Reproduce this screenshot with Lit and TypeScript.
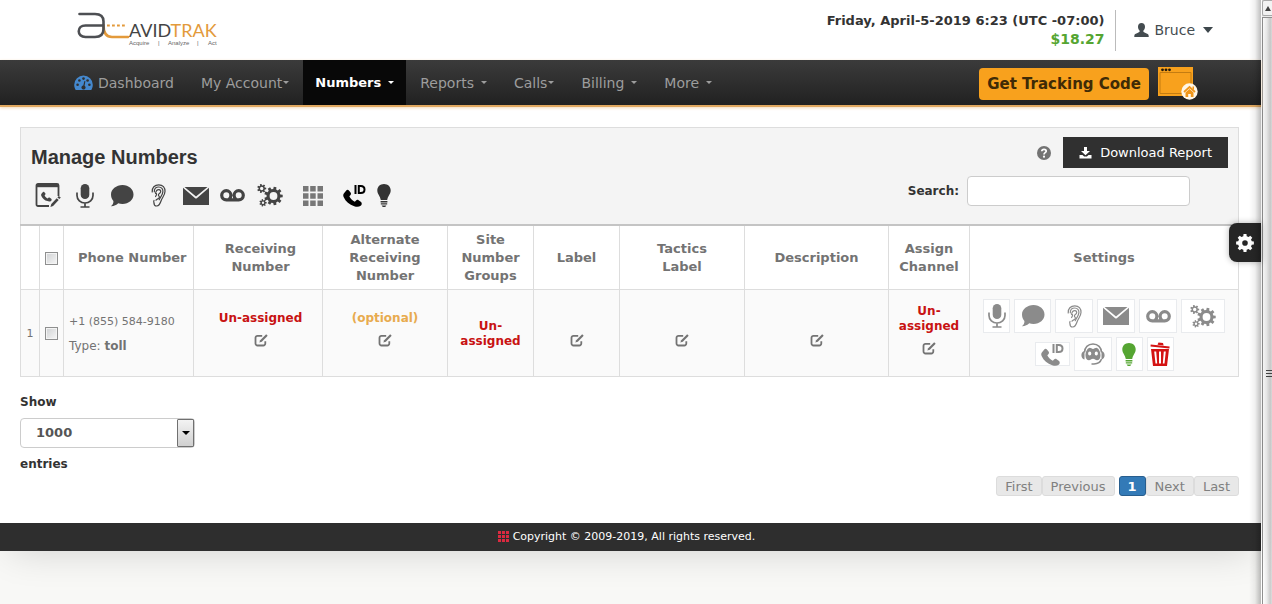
import { LitElement, html, svg, css, nothing, TemplateResult } from "lit";
import { customElement } from "lit/decorators.js";

type Icon = { w: number; h: number; body: TemplateResult };

/* Outline of a cog with n teeth, centred on (cx, cy). */
function cog(cx: number, cy: number, outer: number, inner: number, hole: number, n: number): string {
  const pts: string[] = [];
  for (let i = 0; i < n; i++) {
    const a = (i / n) * Math.PI * 2;
    const s = Math.PI / n;
    for (const [r, d] of [[inner, -s * 0.62], [outer, -s * 0.42], [outer, s * 0.42], [inner, s * 0.62]]) {
      pts.push(`${(cx + r * Math.cos(a + d)).toFixed(2)} ${(cy + r * Math.sin(a + d)).toFixed(2)}`);
    }
  }
  return `M${pts.join("L")}ZM${cx - hole} ${cy}a${hole} ${hole} 0 1 0 ${hole * 2} 0a${hole} ${hole} 0 1 0 ${-hole * 2} 0Z`;
}

const handset =
  "M1.2 9.6C.2 10.6-.1 12 .6 13.6 2.6 18 6.400 21.200 11 22.600 13.500 23.400 15.800 23.200 17.300 22.200 18.500 21.300 18.800 19.600 17.700 18.500L15.300 16.700C14.500 16.100 13.500 16.100 12.800 16.900L11.600 18.200C9.300 17 7.300 15 6.200 12.800L7.200 11.800C8 11 8 10 7.400 9.200L5.800 7.200C5 6.200 3.800 6.300 3 7.400Z";

const ICONS: Record<string, Icon> = {
  callEdit: {
    w: 26, h: 25,
    body: svg`<path d="M14 23H3a1.500 1.500 0 0 1-1.500-1.500V2.500A1.500 1.500 0 0 1 3 1h19a1.500 1.500 0 0 1 1.500 1.500V13" fill="none" stroke="currentColor" stroke-width="1.800"/>
      <path d="M1.500 1h22v3.200h-22z"/>
      <path transform="translate(6 5) scale(.58)" d=${handset}/>
      <path d="M25.800 14.500l-2-1.500-1.400 1.500 2 1.600zM21.700 15.200l2 1.700-5.600 6-2.700 1.200.9-3z"/>`,
  },
  mic: {
    w: 18, h: 24,
    body: svg`<rect x="4.700" y="0" width="8.600" height="15" rx="4.300"/>
      <path d="M1 8.500V11.500a8 7.500 0 0 0 16 0V8.500M9 19v4M4.500 23h9" fill="none" stroke="currentColor" stroke-width="1.700"/>`,
  },
  chat: {
    w: 24, h: 22,
    body: svg`<path d="M12.500 0C18.800 0 23.500 4.300 23.500 9.500S18.800 19 12.500 19c-1.500 0-3-.2-4.300-.7C6.500 20 4 21.400.8 21.300 2.700 19.800 3.600 18 3.400 15.900 1.800 14.200 1 12 1 9.500 1 4.300 6.200 0 12.500 0Z"/>`,
  },
  ear: {
    w: 15, h: 23,
    body: svg`<g fill="none" stroke="currentColor" stroke-width="1.200" stroke-linecap="round">
      <path d="M1.200 8C.8 3.500 3.800.8 7.800.8c4 0 6.400 2.800 6.200 6.700-.2 4-2.800 5.900-3.800 9-.9 2.800-1.800 5.400-4.400 5.500-1.600.1-2.700-1-2.800-2.500"/>
      <path d="M3.300 7.800C3.300 4.800 5 3 7.700 3c2.900 0 4.400 2 4.200 4.600-.2 3.500-2.600 5.300-3.700 8.100"/>
      <path d="M4.500 9.500C5 7 6.300 5.600 7.900 5.700c1.600.1 2.100 1.500 1.600 2.600-.6 1.300-2.200 1.300-2.100 2.700.1 1.100 1.300 1.200 1 2.300-.4 1.400-2.300 1.300-3.400 2.900"/>
      <path d="M5.500 9.600c.3 1-.3 2-.9 2.900M3 16.500c-.5 1-.4 2 .2 2.600"/></g>`,
  },
  mail: {
    w: 26, h: 18,
    body: svg`<path d="M1.500 0h23L13 9.500zM0 .8l12.200 10.400a1.200 1.200 0 0 0 1.600 0L26 .8V18H0z"/>`,
  },
  voicemail: {
    w: 25, h: 13,
    body: svg`<path d="M6.300 1.700a4.600 4.600 0 1 0 0 9.200h12.400a4.600 4.600 0 1 0-4.600-4.600c0 1.800.8 3.300 2 4.100M6.300 1.700a4.600 4.600 0 0 1 4.600 4.600c0 1.800-.8 3.300-2 4.100" fill="none" stroke="currentColor" stroke-width="3.200"/>`,
  },
  gears: {
    w: 26, h: 23,
    body: svg`<path fill-rule="evenodd" d=${cog(16.5, 12, 9.3, 7, 3.9, 9)}/>
      <path fill-rule="evenodd" d=${cog(4.7, 4.5, 4.6, 3.2, 1.7, 7)}/>
      <path fill-rule="evenodd" d=${cog(6, 18.8, 3.7, 2.6, 1.2, 7)}/>`,
  },
  grid: {
    w: 20, h: 20,
    body: svg`<path d="M0 0h5.500v5.500H0zM7.200 0h5.500v5.500H7.200zM14.500 0H20v5.500h-5.500zM0 7.200h5.500v5.500H0zM7.200 7.200h5.500v5.500H7.200zM14.500 7.200H20v5.500h-5.500zM0 14.500h5.500V20H0zM7.200 14.500h5.500V20H7.200zM14.500 14.500H20V20h-5.500z"/>`,
  },
  callId: {
    w: 23, h: 23,
    body: svg`<path transform="translate(0 -.8) scale(1.020)" d=${handset}/>
      <path d="M12.500 1v9M15.800 2h2c2.300 0 3.700 1.100 3.700 3.500S20.100 9 17.800 9h-2z" fill="none" stroke="currentColor" stroke-width="2"/>`,
  },
  bulb: {
    w: 14, h: 23,
    body: svg`<path d="M7 0c3.900 0 6.700 2.800 6.700 6.400 0 3.700-2.900 5.400-3.500 9.600H3.800C3.200 11.800.3 10.100.3 6.400.3 2.800 3.100 0 7 0ZM3.600 17h6.800v1.400H3.600zM3.800 19.300h6.400v1.300H3.800zM4.600 21.400h4.800L8.200 23H5.800z"/>`,
  },
  agent: {
    w: 24, h: 22,
    body: svg`<path d="M3.500 9.500C3.500 4.500 7 1 12 1s8.500 3.500 8.500 8.500" fill="none" stroke="currentColor" stroke-width="1.500"/>
      <path d="M3.500 8v8.500C1.500 16 .4 14.500.4 12.300S1.500 8.600 3.500 8ZM20.500 8v8.500c2-.5 3.100-2 3.100-4.200s-1.100-3.700-3.100-4.300Z"/>
      <path fill-rule="evenodd" d="M12 6c1.200 0 2-1.200 3.500-1.200 2.600.6 4 4.600 4 7.700 0 3-1.400 4.700-3.500 4.700-1.500 0-2.300-1.400-4-1.400s-2.500 1.400-4 1.400c-2.100 0-3.500-1.700-3.500-4.700 0-3.100 1.400-7.100 4-7.700C10 4.800 10.800 6 12 6ZM8.700 8.600a1.600 2 0 1 0 0 4 1.600 2 0 0 0 0-4ZM15.300 8.600a1.600 2 0 1 0 0 4 1.600 2 0 0 0 0-4Z"/>
      <path d="M20.500 16c-1 3.200-3.200 4.800-7.500 5H10.500" fill="none" stroke="currentColor" stroke-width="1.500"/>`,
  },
  trash: {
    w: 20, h: 24,
    body: svg`<path d="M.6 3.400L19.500 5.500" stroke="currentColor" stroke-width="2"/><path d="M7.500 2.800L8.500.4 13 .9l.6 2.600z"/>
      <path fill-rule="evenodd" d="M1 7h18l-2 17H3zM4.200 9.500l1.300 12h1.700L6.200 9.500zM9 9.500v12h2v-12zM13.800 9.500l-1 12h1.700l1.300-12z"/>`,
  },
  edit: {
    w: 14, h: 13,
    body: svg`<path d="M8.200 1.800H3.600A2 2 0 0 0 1.500 3.900v5.500a2 2 0 0 0 2.100 2.100h5.600a2 2 0 0 0 2.100-2.100V7.200" fill="none" stroke="currentColor" stroke-width="1.800"/>
      <path d="M12.200.3l1.500 1.400-5.900 6-2.500.9.900-2.400z"/>`,
  },
  gauge: {
    w: 19, h: 16,
    body: svg`<path d="M9.500.5A9.300 9.300 0 0 0 .2 9.800c0 2 .6 3.700 1.500 5.200h15.600c.9-1.500 1.500-3.200 1.500-5.200A9.300 9.300 0 0 0 9.500.5Z"/>
      <g fill="#303030"><circle cx="3.600" cy="9.800" r="1.300"/><circle cx="5.400" cy="5.500" r="1.300"/><circle cx="9.500" cy="3.600" r="1.300"/><circle cx="13.600" cy="5.500" r="1.300"/><circle cx="15.400" cy="9.800" r="1.300"/><path d="M10.400 5.900l1 .3-.8 4.500a2.100 2.100 0 1 1-1.300-.3z"/></g>`,
  },
  user: {
    w: 15, h: 14,
    body: svg`<path d="M7.500 0c2.200 0 3.500 1.600 3.500 3.800 0 1.700-.7 3.100-1.700 4 0 1 .4 1.400 1.700 1.900 2.400.9 3.700 1.400 3.700 3.300v1H.3v-1c0-1.900 1.300-2.400 3.700-3.300 1.300-.5 1.700-.9 1.700-1.900C4.700 6.900 4 5.500 4 3.800 4 1.600 5.300 0 7.500 0Z"/>`,
  },
  help: {
    w: 14, h: 14,
    body: svg`<circle cx="7" cy="7" r="7"/><path d="M4.800 5.300C4.900 3.800 5.800 3.300 7 3.300s2.200.7 2.200 1.900C9.200 6.700 7 6.700 7 8.500" fill="none" stroke="#fff" stroke-width="1.700"/><circle cx="7" cy="10.700" r="1.100" fill="#fff"/>`,
  },
  download: {
    w: 13, h: 12,
    body: svg`<path d="M5 0h3v4h3L6.500 8.300 2 4h3zM.5 8h3l1.600 1.500h2.800L9.500 8h3v3.500H.5z"/>`,
  },
  cog: {
    w: 18, h: 18,
    body: svg`<path fill-rule="evenodd" d=${cog(9, 9, 9, 7, 2.8, 8)}/>`,
  },
  site: {
    w: 41, h: 34,
    body: svg`<path fill="#f8a11d" d="M0 0h35v29H0z"/><path d="M2 5.500h31v21H2z" fill="none" stroke="#c47c11" stroke-width="1"/>
      <g fill="#221a0c"><circle cx="4.500" cy="2.800" r="1.400"/><circle cx="8" cy="2.800" r="1.400"/><circle cx="11.500" cy="2.800" r="1.400"/></g>
      <circle cx="31.500" cy="24.500" r="8.200" fill="#fff6e6"/>
      <path d="M26 25l5.500-5 5.500 5" fill="none" stroke="#f0961a" stroke-width="1.700"/><path fill="#f0961a" d="M34.500 19.500h1.500v3.500l-1.500-1.300zM27.500 25.500l4-3.600 4 3.600V30h-2.700v-3h-2.600v3h-2.700z"/>`,
  },
};

function icon(name: string) {
  const i = ICONS[name];
  return html`<svg width=${i.w} height=${i.h} viewBox="0 0 ${i.w} ${i.h}" fill="currentColor" aria-hidden="true">${i.body}</svg>`;
}

const shared = css`
  :host { display: block; }
  * { box-sizing: border-box; }
  svg { display: block; flex: none; }
  button { font: inherit; color: inherit; border: 0; padding: 0; background: none; cursor: pointer; }
  a { color: inherit; text-decoration: none; }
`;

@customElement("site-header")
class SiteHeader extends LitElement {
  static styles = [shared, css`
    .bar { display: flex; align-items: center; height: 60px; padding: 0 48px 0 77px; background: #fff; }
    .logo { margin-right: auto; }
    .word { font: 18px Lato, sans-serif; }
    .tag { font: 6px "Liberation Sans", sans-serif; fill: #666; }
    .status { text-align: right; font-weight: bold; font-size: 13px; line-height: 18px; color: #333; padding-right: 11px; }
    .balance { font-size: 14px; color: #55a532; }
    .user { display: flex; align-items: center; height: 41px; padding-left: 18px; gap: 5px; border-left: 1px solid #bbb; font-size: 14px; color: #444c50; }
    .arrow { margin-left: 3px; border: 5px solid transparent; border-top: 6px solid #3d474c; border-bottom: 0; }
  `];
  render() {
    return html`<header class="bar">
      <a class="logo" href="#" aria-label="AvidTrak">
        <svg width="142" height="42" viewBox="0 0 142 42">
          <g fill="none" stroke-width="2.600" stroke-linecap="round">
            <path stroke="#e39a3b" d="M26.500 16c0 6 1.500 12 8.500 12H51"/>
            <path stroke="#4d4f53" d="M2.500 5H18c5.500 0 8.500 2.500 8.500 7.500V20c0 5-3 8-8.500 8H8.500c-9 0-9-11.500 0-11.500H26"/>
          </g>
          <path d="M30 16.500H50" stroke="#e39a3b" stroke-width="2" stroke-dasharray="2.800 2.200"/>
          <text class="word" x="52" y="28" fill="#444">AVID<tspan fill="#e39a3b">TRAK</tspan></text>
          <text class="tag" x="52" y="36">Acquire</text><text class="tag" x="81" y="36">|</text>
          <text class="tag" x="91" y="36">Analyze</text><text class="tag" x="120" y="36">|</text>
          <text class="tag" x="131" y="36">Act</text>
        </svg>
      </a>
      <div class="status">
        <div>Friday, April-5-2019 6:23 (UTC -07:00)</div>
        <div class="balance">$18.27</div>
      </div>
      <button class="user">${icon("user")}<span>Bruce</span><i class="arrow"></i></button>
    </header>`;
  }
}

const MENU = [
  { label: "Dashboard", icon: "gauge" },
  { label: "My Account", caret: "tight" },
  { label: "Numbers", caret: "wide", active: true },
  { label: "Reports", caret: "wide" },
  { label: "Calls", caret: "tight" },
  { label: "Billing", caret: "wide" },
  { label: "More", caret: "wide" },
];

@customElement("site-nav")
class SiteNav extends LitElement {
  static styles = [shared, css`
    .nav { display: flex; align-items: stretch; gap: 1px; height: 47px; padding: 0 62px 0 61px; background: linear-gradient(#3b3b3b, #212121); border-bottom: 2px solid #e0a860; box-shadow: 0 1px 3px #f3d9b8; }
    .item { display: flex; align-items: center; padding: 0 13px; font-size: 14px; color: #9d9d9d; }
    .item svg { margin-right: 5px; color: #4488ce; }
    .active { padding: 0 12px; background: #080808; color: #fff; font-weight: bold; font-size: 13px; }
    .caret { border: 3px solid transparent; border-top-color: currentColor; border-bottom: 0; margin-left: 1px; }
    .wide { margin-left: 7px; }
    .tools { display: flex; align-items: center; gap: 9px; margin-left: auto; padding-top: 2px; }
    .cta { height: 32px; padding: 0 8px; border-radius: 4px; background: #f8a11d; color: #3f2b06; font-weight: bold; font-size: 15px; }
  `];
  render() {
    return html`<nav class="nav">
      ${MENU.map((m) => html`<a class="item ${m.active ? "active" : ""}" href="#">${m.icon ? icon(m.icon) : nothing}${m.label}${m.caret ? html`<i class="caret ${m.caret}"></i>` : nothing}</a>`)}
      <div class="tools"><button class="cta">Get Tracking Code</button><a href="#" aria-label="Site">${icon("site")}</a></div>
    </nav>`;
  }
}

@customElement("numbers-toolbar")
class NumbersToolbar extends LitElement {
  static styles = [shared, css`
    .panel { display: flex; justify-content: space-between; padding: 9px 10px 10px; border: 1px solid #ddd; border-bottom: 0; background: #f4f4f4; }
    .title { margin: 0; font: bold 20px/40px "Liberation Sans", sans-serif; color: #333; }
    .icons { display: flex; color: #444; margin-left: -2px; }
    .icons button { display: grid; place-items: center; width: 37px; height: 37px; }
    .icons .grid { width: 50px; color: #777; }
    .icons .callId { width: 32px; color: #000; }
    .icons .bulb { width: 28px; color: #333; }
    .right { display: flex; flex-direction: column; align-items: flex-end; gap: 8px; }
    .line { display: flex; align-items: center; gap: 12px; color: #737373; }
    .download { display: flex; align-items: center; gap: 8px; height: 31px; padding: 0 16px; background: #303030; color: #fff; font-size: 13px; }
    .search { display: flex; align-items: center; gap: 8px; margin-right: 38px; font-size: 12px; font-weight: bold; color: #333; }
    .field { width: 223px; height: 30px; border: 1px solid #ccc; border-radius: 4px; background: #fff; }
  `];
  render() {
    const tools = ["callEdit", "mic", "chat", "ear", "mail", "voicemail", "gears", "grid", "callId", "bulb"];
    return html`<div class="panel">
      <div>
        <h1 class="title">Manage Numbers</h1>
        <div class="icons">${tools.map((t) => html`<button class=${t} aria-label=${t}>${icon(t)}</button>`)}</div>
      </div>
      <div class="right">
        <div class="line"><button aria-label="Help">${icon("help")}</button><button class="download">${icon("download")}Download Report</button></div>
        <label class="search">Search: <input class="field" type="search"></label>
      </div>
    </div>`;
  }
}

@customElement("numbers-table")
class NumbersTable extends LitElement {
  static styles = [shared, css`
    table { width: 100%; table-layout: fixed; border-collapse: collapse; color: #737373; }
    th, td { border: 1px solid #ddd; padding: 2px 0 0; text-align: center; vertical-align: middle; font-size: 12px; }
    th { height: 64px; border-top: 2px solid #c4c4c4; font-size: 13px; line-height: 18px; }
    td { height: 87px; background: #fafafa; line-height: 15px; }
    td.up { padding: 0 0 6px; }
    td.low { padding: 16px 0 0; }
    .c1 { width: 19px; } .c2 { width: 24px; } .c3 { width: 130px; } .c4 { width: 129px; } .c5 { width: 125px; }
    .c6 { width: 86px; } .c7 { width: 86px; } .c8 { width: 125px; } .c9 { width: 144px; } .c10 { width: 81px; }
    th.phone { text-align: left; padding-left: 14px; white-space: nowrap; }
    th.receiving, td.receiving { padding-left: 5px; }
    td.number { text-align: left; padding-left: 5px; line-height: 25px; }
    .small { font-size: 11px; }
    .tick { appearance: none; display: block; width: 13px; height: 13px; margin: 0 auto; border: 1px solid #8e8f8f; background: linear-gradient(135deg, #cfd1d3, #f6f6f6); box-shadow: inset 0 0 0 1px #f4f4f4; }
    .red { color: #c81212; font-weight: bold; }
    .amber { color: #e8ab4f; font-weight: bold; }
    .edit { display: block; margin: 0 auto; padding: 1px; }
    .red + .edit, .amber + .edit { margin-top: 7px; }
    .row { display: flex; justify-content: center; align-items: center; gap: 4px; color: #8b8b8b; }
    .row + .row { margin-top: 4px; }
    td.settings { padding: 5px 0 0; }
    .box { display: grid; place-items: center; width: 38px; height: 34px; border: 1px solid #e9ebee; background: #fff; }
    .box.mic, .box.bulb, .box.trash { width: 27px; }
    .box.chat { width: 37px; }
    .box.gears { width: 44px; }
    .box.callId { width: 35px; height: 24px; }
    .box.bulb { color: #55a532; }
    .box.trash { color: #d41313; }
  `];
  private edit() {
    return html`<button class="edit" aria-label="Edit">${icon("edit")}</button>`;
  }
  private boxes(names: string[]) {
    return html`<div class="row">${names.map((n) => html`<button class="box ${n}" aria-label=${n}>${icon(n)}</button>`)}</div>`;
  }
  render() {
    return html`<table>
      <colgroup>${[1, 2, 3, 4, 5, 6, 7, 8, 9, 10, 11].map((n) => html`<col class="c${n}">`)}</colgroup>
      <thead><tr>
        <th></th><th><input class="tick" type="checkbox" aria-label="Select all"></th>
        <th class="phone">Phone Number</th>
        <th class="receiving">Receiving<br>Number</th><th>Alternate<br>Receiving<br>Number</th><th>Site<br>Number<br>Groups</th>
        <th>Label</th><th>Tactics<br>Label</th><th>Description</th><th>Assign<br>Channel</th><th>Settings</th>
      </tr></thead>
      <tbody><tr>
        <td class="small">1</td><td><input class="tick" type="checkbox" aria-label="Select row"></td>
        <td class="number"><div class="small">+1 (855) 584-9180</div><div>Type: <b>toll</b></div></td>
        <td class="up receiving"><div class="red">Un-assigned</div>${this.edit()}</td>
        <td class="up"><div class="amber">(optional)</div>${this.edit()}</td>
        <td><div class="red">Un-<br>assigned</div></td>
        <td class="low">${this.edit()}</td><td class="low">${this.edit()}</td><td class="low">${this.edit()}</td>
        <td class="up"><div class="red">Un-<br>assigned</div>${this.edit()}</td>
        <td class="settings">${this.boxes(["mic", "chat", "ear", "mail", "voicemail", "gears"])}${this.boxes(["callId", "agent", "bulb", "trash"])}</td>
      </tr></tbody>
    </table>`;
  }
}

@customElement("table-footer")
class TableFooter extends LitElement {
  static styles = [shared, css`
    .length { display: flex; flex-direction: column; align-items: flex-start; gap: 6px; margin-top: 15px; font-size: 12px; line-height: 20px; font-weight: bold; color: #333; }
    .select { position: relative; }
    select { appearance: none; display: block; width: 175px; height: 30px; padding: 0 15px; border: 1px solid #ccc; border-radius: 4px; background: #fff; font: bold 13px "DejaVu Sans", sans-serif; color: #555; }
    .drop { position: absolute; inset: 1px 1px 1px auto; width: 17px; display: grid; place-items: center; border: 1px solid #707070; border-radius: 1px; background: linear-gradient(#f3f3f3, #d0d0d0); pointer-events: none; }
    .drop::after { content: ""; border: 4px solid transparent; border-top-color: #000; border-bottom: 0; }
    .pages { display: flex; justify-content: flex-end; margin-top: 2px; font-size: 13px; line-height: 18px; color: #808080; }
    .pages button { height: 20px; padding: 1px 8px 0; border: 1px solid #dcdcdc; border-radius: 3px; background: #e8e8e8; }
    .pages .current { margin-left: 4px; border-color: #285e8e; background: #337ab7; color: #fff; font-weight: bold; }
  `];
  render() {
    return html`<label class="length">Show
        <span class="select"><select><option>1000</option></select><i class="drop"></i></span>
        entries</label>
      <div class="pages">${["First", "Previous", "1", "Next", "Last"].map((p) => html`<button class=${p === "1" ? "current" : ""}>${p}</button>`)}</div>`;
  }
}

@customElement("app-root")
class AppRoot extends LitElement {
  static styles = [shared, css`
    :host { display: flex; min-height: 100vh; background: #f8f8f6; font-family: "DejaVu Sans", Verdana, sans-serif; }
    .page { position: relative; flex: 1; min-width: 0; }
    .page::after { content: ""; position: absolute; inset: 0 0 0 auto; width: 12px; background: linear-gradient(to right, transparent, rgba(0, 0, 0, 0.06) 50%, rgba(0, 0, 0, 0.26)); pointer-events: none; }
    .shade { background: #fff; box-shadow: 0 10px 36px -10px rgba(0, 0, 0, 0.16); }
    .main { padding: 20px 22px 27px 20px; }
    .foot { display: flex; justify-content: center; align-items: center; gap: 4px; height: 28px; padding-right: 8px; background: #2e2e2e; color: #fff; font-size: 11px; }
    .foot svg { width: 11px; height: 11px; color: #dc2a40; }
    .tab { position: absolute; top: 223px; right: 0; display: grid; place-items: center; width: 32px; height: 39px; border-radius: 8px 0 0 8px; background: #262626; color: #fff; box-shadow: 0 0 6px rgba(0, 0, 0, 0.3); }
    .scroll { display: flex; flex-direction: column; width: 11px; background: #eee; border-left: 1px solid #fff; overflow: hidden; }
    .up { display: grid; place-items: center; height: 16px; border: 1px solid #aaa; border-right: 0; border-radius: 2px 0 0 2px; background: #f4f4f4; }
    .up::after { content: ""; border: 3px solid transparent; border-bottom: 5px solid #444; border-top: 0; }
    .thumb { flex: 1; display: flex; flex-direction: column; justify-content: center; align-items: flex-end; gap: 2px; margin-top: 1px; padding-top: 124px; border: 1px solid #909090; border-width: 1px 0 0 1px; background: linear-gradient(to right, #fff, #ededed 40%, #ccc 80%, #ddd); }
    .grip { width: 6px; height: 1px; background: #444; }
  `];
  render() {
    return html`<div class="page">
        <div class="shade">
          <site-header></site-header>
          <site-nav></site-nav>
          <main class="main">
            <numbers-toolbar></numbers-toolbar>
            <numbers-table></numbers-table>
            <table-footer></table-footer>
          </main>
          <footer class="foot">${icon("grid")}<span>Copyright © 2009-2019, All rights reserved.</span></footer>
        </div>
        <button class="tab" aria-label="Theme settings">${icon("cog")}</button>
      </div>
      <div class="scroll" aria-hidden="true"><i class="up"></i><div class="thumb"><i class="grip"></i><i class="grip"></i><i class="grip"></i></div></div>`;
  }
}
